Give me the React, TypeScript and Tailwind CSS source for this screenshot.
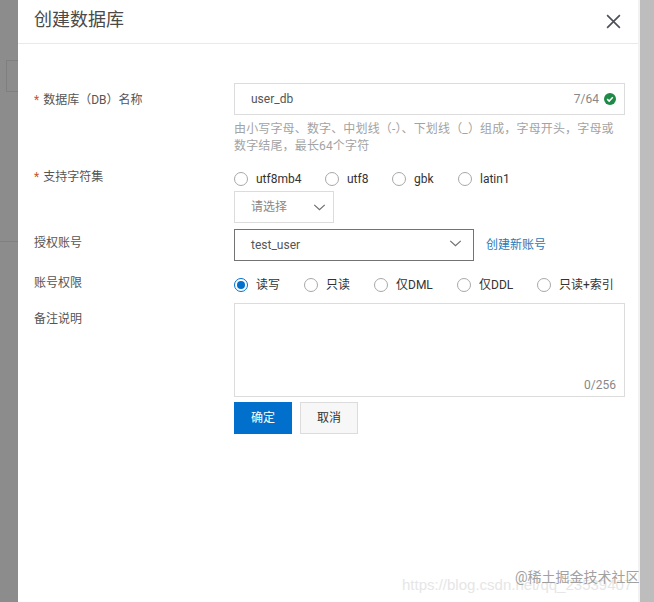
const font = "font-['Roboto','Noto_Sans_CJK_SC',sans-serif]";

function Radio({ label, checked, className }: { label: string; checked?: boolean; className?: string }) {
  return (
    <label className={`flex items-center shrink-0 ${className ?? ""}`}>
      <span className={`w-[14px] h-[14px] rounded-full bg-white flex items-center justify-center shrink-0 border ${checked ? "border-[#0070cc]" : "border-[#a8a8a8]"}`}>
        {checked && <span className="w-2 h-2 rounded-full bg-[#0070cc]" />}
      </span>
      <span className="ml-2 text-xs text-[#333]">{label}</span>
    </label>
  );
}

function Chevron({ className }: { className?: string }) {
  return (
    <svg viewBox="0 0 14 8" className={className} fill="none" stroke="#6f6f6f" strokeWidth="1.4">
      <path d="M1 1l6 5.6L13 1" />
    </svg>
  );
}

function Label({ required, children, className }: { required?: boolean; children: React.ReactNode; className?: string }) {
  return (
    <div className={`w-[200px] shrink-0 text-xs text-[#555] ${className ?? ""}`}>
      {required && <span className="text-[#c8562e] mr-[4px]">*</span>}
      {children}
    </div>
  );
}

export default function App() {
  return (
    <div className={`relative flex w-[654px] h-[602px] overflow-hidden ${font}`}>
      {/* 遮罩 */}
      <div className="relative w-[18px] shrink-0 bg-[#8c8c8c]">
        <div className="absolute left-[6px] top-[60px] w-3 h-[32px] border border-r-0 border-[#7f7f7f]" />
        <div className="absolute left-0 top-[241px] w-full h-px bg-[#808080]" />
      </div>

      <div className="w-[620px] shrink-0 bg-white">
        {/* Header */}
        <div className="h-[44px] border-b border-[#e9e9e9] pl-4 pr-[17px] flex items-center justify-between">
          <h1 className="text-lg font-normal text-[#4a4a4a] -mt-[4px]">创建数据库</h1>
          <svg viewBox="0 0 16 16" className="w-[15px] h-[15px] -mt-[1px]" fill="none" stroke="#4b4f56" strokeWidth="1.7">
            <path d="M1.2 1.2l13.6 13.6M14.8 1.2L1.2 14.8" />
          </svg>
        </div>

        <div className="pl-4 pr-[13px] pt-[39px]">
          <div className="flex">
            <Label required className="pt-[9px]">数据库（DB）名称</Label>
            <div className="w-[391px]">
              <div className="h-[32px] border border-[#dcdcdc] pl-4 pr-[8px] flex items-center justify-between">
                <span className="text-xs text-[#555]">user_db</span>
                <span className="flex items-center gap-[5px] text-xs text-[#888]">
                  7/64
                  <svg viewBox="0 0 12 12" className="w-3 h-3 -mt-[1px]">
                    <circle cx="6" cy="6" r="6" fill="#1f8a47" />
                    <path d="M3.2 6.1l2 2 3.6-3.8" fill="none" stroke="#fff" strokeWidth="1.5" />
                  </svg>
                </span>
              </div>
              <p className="mt-[6px] w-[384px] text-xs leading-[17px] tracking-[0.15px] text-[#a3a3a3]">
                由小写字母、数字、中划线（-）、下划线（_）组成，字母开头，字母或数字结尾，最长64个字符
              </p>
            </div>
          </div>

          <div className="flex mt-[15px]">
            <Label required className="-mt-[1px]">支持字符集</Label>
            <div>
              <div className="flex h-[18px] items-center">
                <Radio label="utf8mb4" className="w-[91px]" />
                <Radio label="utf8" className="w-[67px]" />
                <Radio label="gbk" className="w-[66px]" />
                <Radio label="latin1" />
              </div>
              <div className="mt-[3px] w-[100px] h-[32px] border border-[#dcdcdc] pl-4 pr-[6px] flex items-center justify-between">
                <span className="text-xs text-[#888]">请选择</span>
                <Chevron className="w-[13px] h-[7px] mr-[1px]" />
              </div>
            </div>
          </div>

          <div className="flex mt-[6px]">
            <Label className="pt-[6px]">授权账号</Label>
            <div className="flex items-center">
              <div className="w-[240px] h-[32px] border border-[#737373] pl-4 pr-[11px] flex items-center justify-between">
                <span className="text-xs text-[#555]">test_user</span>
                <Chevron className="w-[13px] h-[7px] -mt-[3px]" />
              </div>
              <span className="ml-3 text-xs text-[#2a7ab8]">创建新账号</span>
            </div>
          </div>

          <div className="flex mt-[15px]">
            <Label className="-mt-[1px]">账号权限</Label>
            <div className="flex h-[18px] items-center">
              <Radio label="读写" checked className="w-[70px]" />
              <Radio label="只读" className="w-[70px]" />
              <Radio label="仅DML" className="w-[83px]" />
              <Radio label="仅DDL" className="w-[80px]" />
              <Radio label="只读+索引" />
            </div>
          </div>

          <div className="flex mt-[9px]">
            <Label className="pt-[8px]">备注说明</Label>
            <div className="w-[391px]">
              <div className="h-[94px] border border-[#dcdcdc] flex items-end justify-end pr-2 pb-[3px]">
                <span className="text-xs text-[#888]">0/256</span>
              </div>
              <div className="flex gap-2 mt-[5px]">
                <button className="w-[58px] h-[32px] bg-[#0070cc] text-white text-xs">确定</button>
                <button className="w-[58px] h-[32px] bg-[#f7f7f7] border border-[#dcdcdc] text-[#333] text-xs">取消</button>
              </div>
            </div>
          </div>
        </div>
      </div>

      <div className="w-[2px] shrink-0 bg-[#f2f2f2]" />
      <div className="flex-1 bg-[#bdbdbd]" />

      {/* 水印 */}
      <span className="absolute left-[402px] top-[575px] text-[15px] leading-[20px] text-[#e6e6e6] whitespace-nowrap font-['Liberation_Sans',sans-serif]">https://blog.csdn.net/qq_23539407</span>
      <span className="absolute left-[515px] top-[568px] text-[14px] leading-[18px] text-[#8a8a8a] opacity-80 whitespace-nowrap">@稀土掘金技术社区</span>
    </div>
  );
}
